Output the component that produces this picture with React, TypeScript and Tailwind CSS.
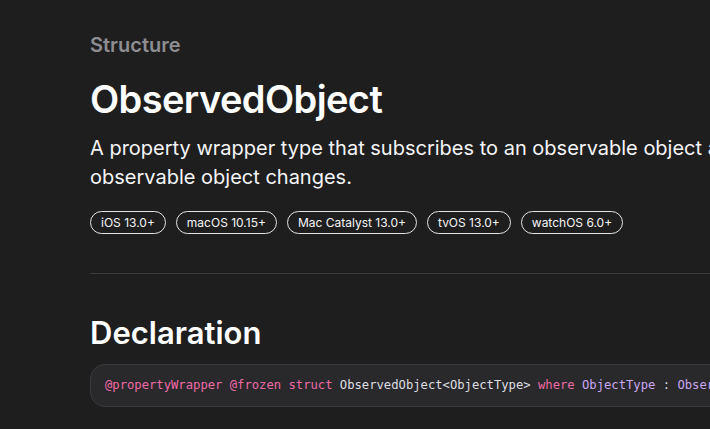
const platforms = ["iOS 13.0+", "macOS 10.15+", "Mac Catalyst 13.0+", "tvOS 13.0+", "watchOS 6.0+"];

const App = () => {
  return (
    <div
      className="w-[710px] h-[429px] overflow-hidden bg-[#1e1e1e] text-[#f5f5f7]"
      style={{ fontFamily: "Inter, 'Noto Sans', sans-serif" }}
    >
      <div className="w-[1000px] pl-[90px] pt-[32px]">
        <div className="text-[20px] font-semibold leading-[26px] text-[#8d8d92]">Structure</div>
        <h1 className="mt-[17px] text-[38px] font-semibold leading-[48px] tracking-[-0.6px] text-white">
          ObservedObject
        </h1>
        <p className="mt-[11px] text-[20px] leading-[29px] text-[#f5f5f7] whitespace-nowrap">
          A property wrapper type that subscribes to an observable object and invalidates a view whenever the
          <br />
          observable object changes.
        </p>
        <div className="mt-[19px] flex gap-[10px]">
          {platforms.map((p) => (
            <span
              key={p}
              className="h-[23px] px-[10px] flex items-center rounded-full border border-[#e5e5e7] text-[12px] text-[#f5f5f7]"
            >
              {p}
            </span>
          ))}
        </div>
        <div className="mt-[39px] h-px bg-[#3a3a3c]" />
        <h2 className="mt-[41px] text-[31px] font-semibold leading-[36px] text-white">Declaration</h2>
        <div
          className="mt-[13px] h-[43px] flex items-center pl-[14px] rounded-[15px] border border-[#3b3b3f] bg-[#29292c] text-[12.2px] whitespace-nowrap text-[#dedee0]"
          style={{ fontFamily: "'DejaVu Sans Mono', 'Liberation Mono', monospace" }}
        >
          <span className="text-[#f06aa6]">@propertyWrapper</span>&nbsp;
          <span className="text-[#f06aa6]">@frozen</span>&nbsp;
          <span className="text-[#f06aa6]">struct</span>&nbsp;
          <span>ObservedObject&lt;ObjectType&gt;</span>&nbsp;
          <span className="text-[#f06aa6]">where</span>&nbsp;
          <span className="text-[#c9a7f2]">ObjectType</span>&nbsp;:&nbsp;
          <span className="text-[#c9a7f2]">ObservableObject</span>
        </div>
      </div>
    </div>
  );
};

export default App;
